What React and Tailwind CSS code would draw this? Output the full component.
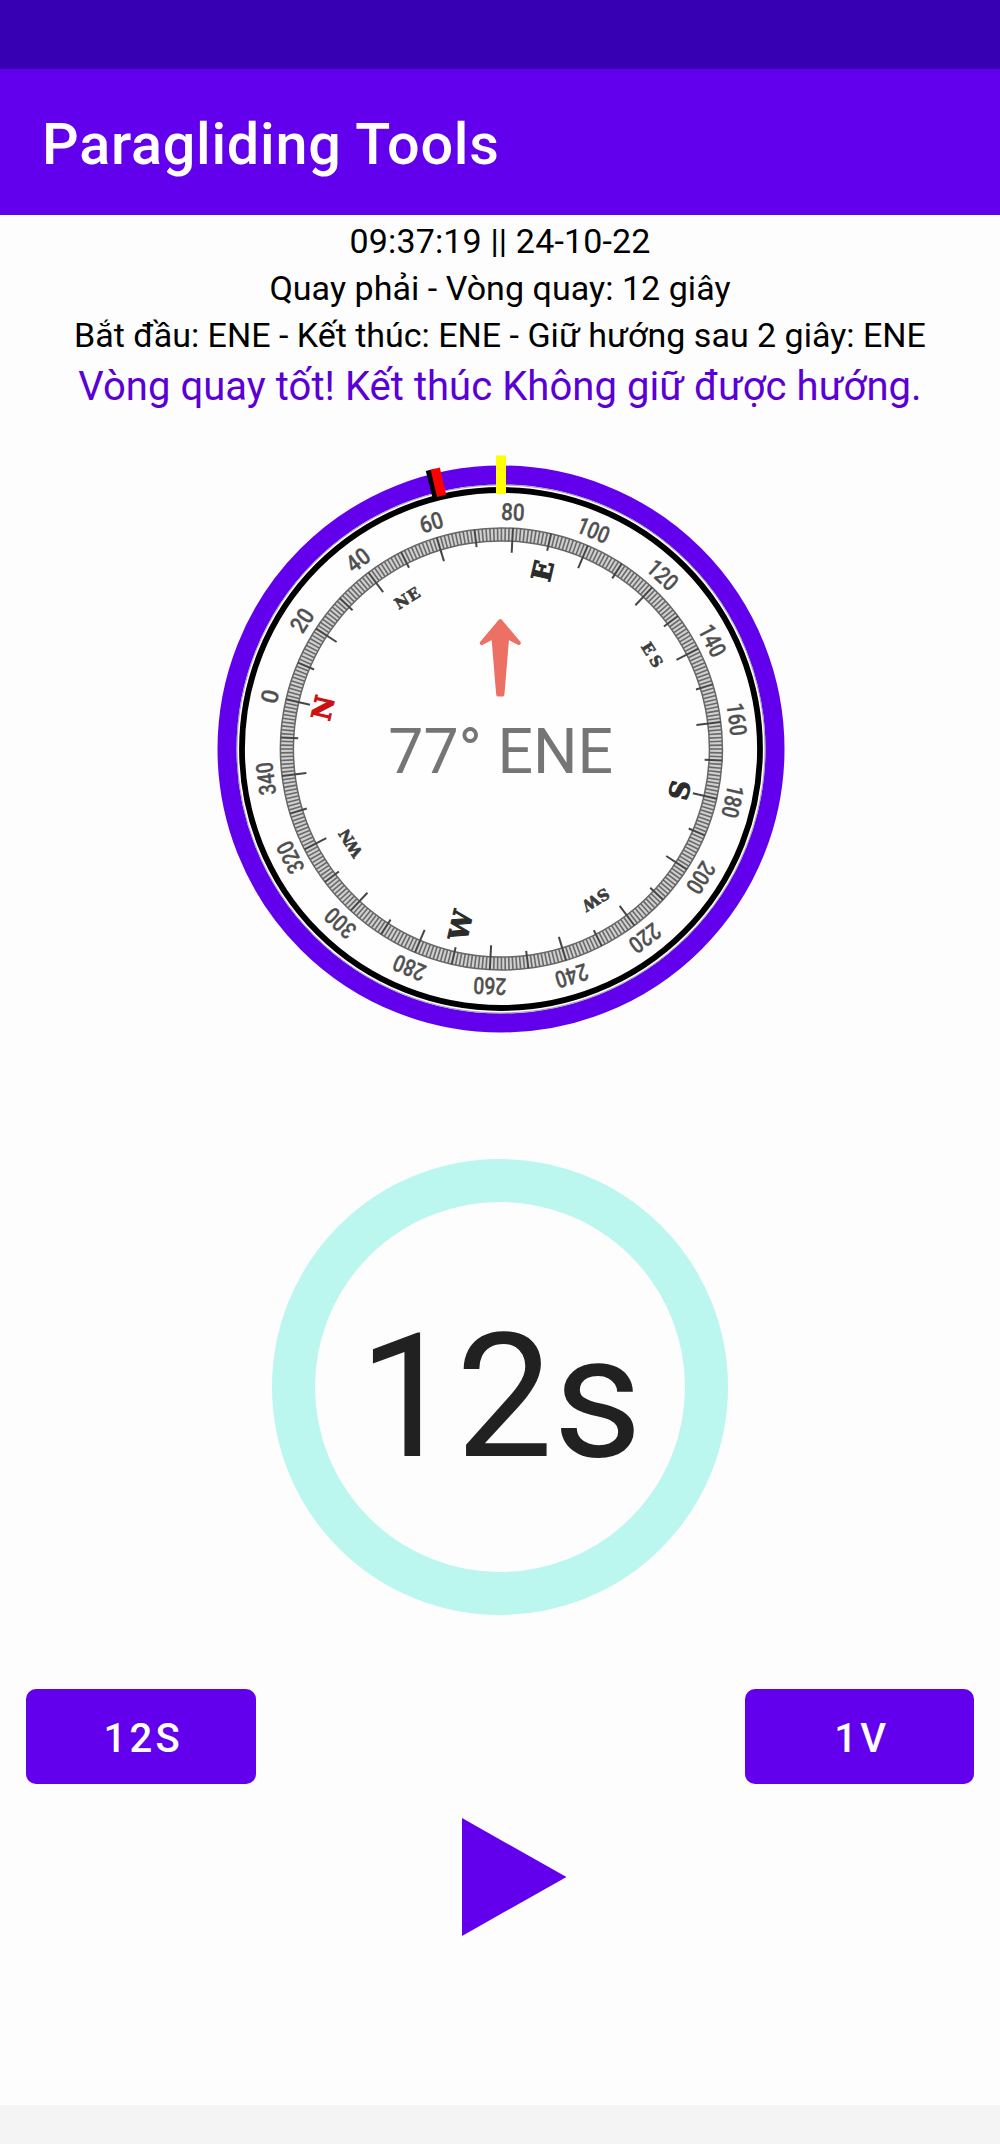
import React from "react";

const HEADING = 77;

const DEGREES = Array.from({ length: 360 }, (_, i) => i);
const LABELS = Array.from({ length: 18 }, (_, i) => i * 20);

// Cardinal letters stand upright on the unrotated dial.
const CARDINALS = [
  { text: "N", x: 0, y: -183, color: "#cc1111" },
  { text: "E", x: 183, y: 0, color: "#2b2b2b" },
  { text: "S", x: 0, y: 183, color: "#2b2b2b" },
  { text: "W", x: -181, y: 0, color: "#2b2b2b" },
];
const INTERCARDINALS = [
  { text: "NE", angle: 45, width: 27 },
  { text: "ES", angle: 135, width: 26.5 },
  { text: "SW", angle: 225, width: 29 },
  { text: "WN", angle: 315, width: 30 },
];

function tickEnd(deg) {
  if (deg % 20 === 0) return -196.5;
  if (deg % 10 === 0) return -203.5;
  return -208;
}

function CompassDial() {
  return (
    <svg className="block h-[600px] w-[600px]" viewBox="-300 -300 600 600">
      <circle r="274" fill="#fefefe" stroke="#6200ee" strokeWidth="19" />
      <circle r="264" fill="none" stroke="#8d8d95" strokeWidth="0.8" />
      <circle r="259" fill="none" stroke="#000" strokeWidth="5.8" />
      <g transform={`translate(0.4 0) rotate(${-HEADING})`}>
        <circle r="214.5" fill="none" stroke="#d0d0d0" strokeWidth="13" />
        <circle r="221" fill="none" stroke="#666" strokeWidth="1.5" />
        <circle r="208" fill="none" stroke="#666" strokeWidth="1.5" />
        {DEGREES.map((deg) => (
          <line
            key={deg}
            x1="0"
            x2="0"
            y1="-221"
            y2={tickEnd(deg)}
            stroke={deg % 10 === 0 ? "#454545" : "#686868"}
            strokeWidth={deg % 10 === 0 ? 2 : 1.6}
            transform={`rotate(${deg})`}
          />
        ))}
        {LABELS.map((deg) => (
          <text
            key={deg}
            y="-229"
            textAnchor="middle"
            transform={`rotate(${deg - 0.2})`}
            fill="#505050"
            stroke="#505050"
            strokeWidth="0.3"
            textLength={deg >= 100 ? 33 : deg === 0 ? undefined : 23.6}
            lengthAdjust="spacingAndGlyphs"
            className="font-['Roboto'] text-[23.5px] font-medium"
          >
            {deg}
          </text>
        ))}
        {CARDINALS.map((c) => (
          <text
            key={c.text}
            x={c.x}
            y={c.y + 9.5}
            textAnchor="middle"
            fill={c.color}
            stroke={c.color}
            strokeWidth="1.1"
            className="font-['DejaVu_Serif'] text-[26.5px] font-bold"
          >
            {c.text}
          </text>
        ))}
        {INTERCARDINALS.map((c) => (
          <text
            key={c.text}
            y="-172.3"
            textAnchor="middle"
            transform={`rotate(${c.angle})`}
            fill="#3c3c3c"
            stroke="#3c3c3c"
            strokeWidth="0.6"
            textLength={c.width}
            lengthAdjust="spacing"
            className="font-['DejaVu_Serif'] text-[15.5px] font-bold"
          >
            {c.text}
          </text>
        ))}
      </g>
      <rect x="-4.7" y="-288" width="9.4" height="28" fill="#000" transform="rotate(-14.2)" />
      <rect x="-4.7" y="-288" width="9.4" height="28" fill="#f00" transform="rotate(-13.2)" />
      <rect x="-5" y="-293.5" width="10" height="38.5" fill="#ff0" />
      <path
        d="M-0.7 -128 L17.8 -106 L6.2 -112 L1.4 -54.5 L-2.8 -54.5 L-7.6 -112 L-19.2 -106 Z"
        fill="#ec7063"
        stroke="#ec7063"
        strokeWidth="4"
        strokeLinejoin="round"
      />
    </svg>
  );
}

function ActionButton({ children }) {
  return (
    <button className="h-[95px] w-[229.5px] rounded-[10px] bg-[#6200ee] pt-[5px] pl-[5px] text-[40px] leading-none font-medium tracking-[3.2px] text-white">
      {children}
    </button>
  );
}

export default function App() {
  return (
    <div className="flex h-[2144px] w-[1000px] flex-col bg-[#fdfdfd] font-['Roboto',sans-serif]">
      <div className="h-[69px] shrink-0 bg-[#3700b3]" />
      <header className="flex h-[146.4px] shrink-0 items-center bg-[#6200ee] pl-[42px]">
        <h1 className="pt-[6px] text-[57.5px] leading-none font-medium tracking-[0.75px] text-white">
          Paragliding Tools
        </h1>
      </header>

      <section className="flex h-[225.6px] shrink-0 flex-col items-center pt-[3px] text-center whitespace-nowrap">
        <p className="text-[34px] leading-[47px] tracking-[0.15px] text-black">09:37:19 || 24-10-22</p>
        <p className="text-[34px] leading-[47px] tracking-[0.05px] text-black">Quay phải - Vòng quay: 12 giây</p>
        <p className="text-[34px] leading-[47px] text-black">
          Bắt đầu: ENE - Kết thúc: ENE - Giữ hướng sau 2 giây: ENE
        </p>
        <p className="text-[40px] leading-[55px] tracking-[0.05px] text-[#5a00d6]">
          Vòng quay tốt! Kết thúc Không giữ được hướng.
        </p>
      </section>

      <section className="relative ml-[200.7px] mt-[8.2px] h-[600px] w-[600px] shrink-0">
        <CompassDial />
        <p className="absolute inset-x-0 top-[272px] text-center text-[62.5px] leading-[62px] text-[#757575]">
          77° ENE
        </p>
      </section>

      <section className="mt-[109.8px] ml-[272.4px] flex h-[456px] w-[456px] shrink-0 items-center justify-center rounded-full border-[43.5px] border-[#bbf6ef]">
        <span className="pt-[21px] text-[173px] leading-none text-[#212121]">12s</span>
      </section>

      <section className="mt-[73.6px] flex shrink-0 justify-between px-[26px]">
        <ActionButton>12S</ActionButton>
        <ActionButton>1V</ActionButton>
      </section>

      <button className="mt-[34.4px] ml-[462px] block w-[104px] shrink-0">
        <svg className="block h-[118px] w-[104px]" viewBox="0 0 104 118">
          <path d="M0 0L104.3 59L0 118Z" fill="#6200ee" />
        </svg>
      </button>

      <div className="mt-auto h-[39px] shrink-0 bg-[#f4f4f4]" />
    </div>
  );
}
